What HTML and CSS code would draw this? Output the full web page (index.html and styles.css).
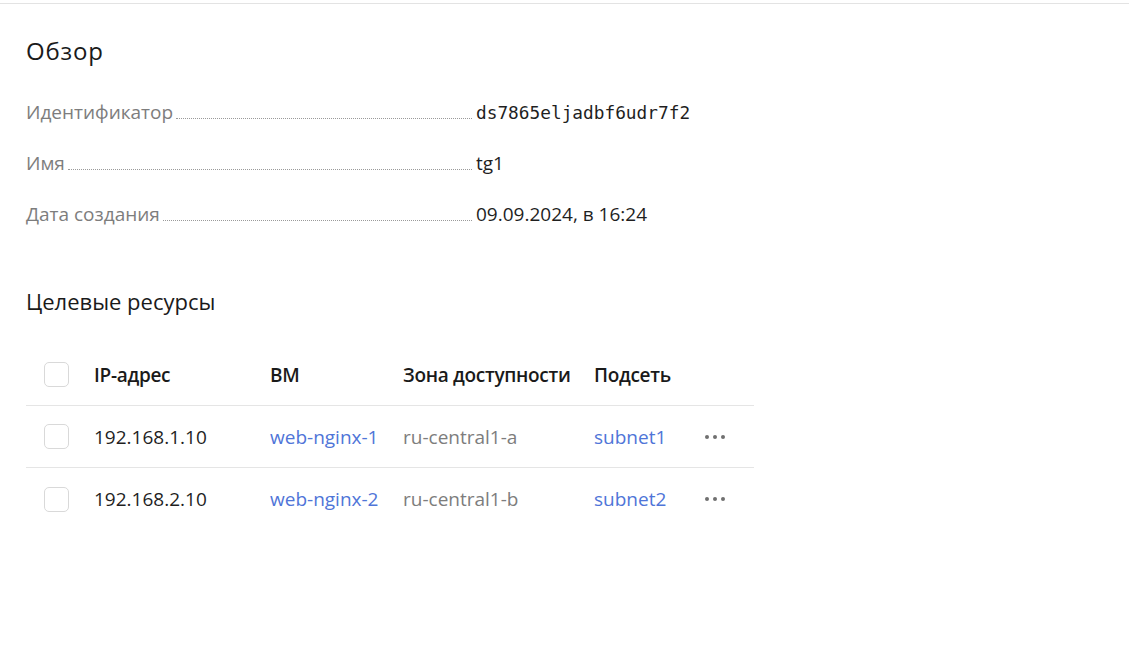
FILE: index.html
```html
<!DOCTYPE html>
<html lang="ru">
<head>
<meta charset="utf-8">
<title>Обзор</title>
<link rel="stylesheet" href="styles.css">
</head>
<body>
<div class="topline"></div>
<main class="page">
  <h2 class="title">Обзор</h2>
  <dl class="props">
    <div class="prop">
      <dt class="prop-name"><span>Идентификатор</span><i class="leader"></i></dt>
      <dd class="prop-value mono">ds7865eljadbf6udr7f2</dd>
    </div>
    <div class="prop">
      <dt class="prop-name"><span>Имя</span><i class="leader"></i></dt>
      <dd class="prop-value">tg1</dd>
    </div>
    <div class="prop">
      <dt class="prop-name"><span>Дата создания</span><i class="leader"></i></dt>
      <dd class="prop-value">09.09.2024, в 16:24</dd>
    </div>
  </dl>

  <h3 class="subtitle">Целевые ресурсы</h3>

  <div class="table">
    <div class="row head">
      <div class="cell"><span class="checkbox"></span></div>
      <div class="cell">IP-адрес</div>
      <div class="cell">ВМ</div>
      <div class="cell">Зона доступности</div>
      <div class="cell">Подсеть</div>
      <div class="cell"></div>
    </div>
    <div class="row">
      <div class="cell"><span class="checkbox"></span></div>
      <div class="cell">192.168.1.10</div>
      <div class="cell"><a class="link" href="#">web-nginx-1</a></div>
      <div class="cell muted">ru-central1-a</div>
      <div class="cell"><a class="link" href="#">subnet1</a></div>
      <div class="cell"><span class="more"><i></i><i></i><i></i></span></div>
    </div>
    <div class="row last">
      <div class="cell"><span class="checkbox"></span></div>
      <div class="cell">192.168.2.10</div>
      <div class="cell"><a class="link" href="#">web-nginx-2</a></div>
      <div class="cell muted">ru-central1-b</div>
      <div class="cell"><a class="link" href="#">subnet2</a></div>
      <div class="cell"><span class="more"><i></i><i></i><i></i></span></div>
    </div>
  </div>
</main>
</body>
</html>
```

FILE: styles.css
```css
* { box-sizing: border-box; }

html, body {
  margin: 0;
  padding: 0;
  background: #fff;
}

body {
  font-family: "Open Sans", "Noto Sans", sans-serif;
  color: #1f1f1f;
  padding-top: 3px;
}

.topline {
  height: 1px;
  background: #e3e3e3;
}

.page {
  padding: 0 26px;
}

.title {
  margin: 32px 0 0;
  font-size: 24px;
  letter-spacing: 0.8px;
  font-weight: 400;
  line-height: 30px;
  color: #1a1a1a;
}

.props {
  margin: 34px 0 0;
  width: 700px;
}

.prop {
  display: flex;
  align-items: baseline;
  height: 51px;
  line-height: 24px;
}

.prop-name {
  display: flex;
  align-items: baseline;
  width: 446px;
  font-size: 19px;
  color: #7d7d7d;
}

.leader {
  flex: 1;
  margin-left: 3px;
  border-bottom: 1px dotted #9a9a9a;
}

.prop-value {
  margin: 0 0 0 4px;
  font-size: 19px;
  color: #1f1f1f;
}

.prop-value.mono {
  font-family: "DejaVu Sans Mono", monospace;
  font-size: 17.8px;
}

.subtitle {
  margin: 34px 0 0;
  font-size: 22px;
  font-weight: 400;
  line-height: 28px;
  color: #1a1a1a;
}

.table {
  margin-top: 29px;
  width: 728px;
}

.row {
  display: grid;
  grid-template-columns: 68px 176px 133px 191px 96px 64px;
  height: 62px;
  align-items: center;
  border-bottom: 1px solid #e5e5e5;
  font-size: 19px;
  color: #1f1f1f;
}

.row.last { border-bottom: none; }

.row.head .cell {
  font-weight: 600;
  letter-spacing: -0.3px;
  color: #1a1a1a;
}

.cell {
  white-space: nowrap;
}

.checkbox {
  display: block;
  width: 25px;
  height: 25px;
  margin-left: 18px;
  border: 1px solid #d9d9d9;
  border-radius: 5px;
}

.link {
  color: #4f75d8;
  text-decoration: none;
}

.muted { color: #7d7d7d; }

.more {
  display: flex;
  gap: 4px;
  margin-left: 15px;
}

.more i {
  width: 4px;
  height: 4px;
  border-radius: 50%;
  background: #707070;
}
```
